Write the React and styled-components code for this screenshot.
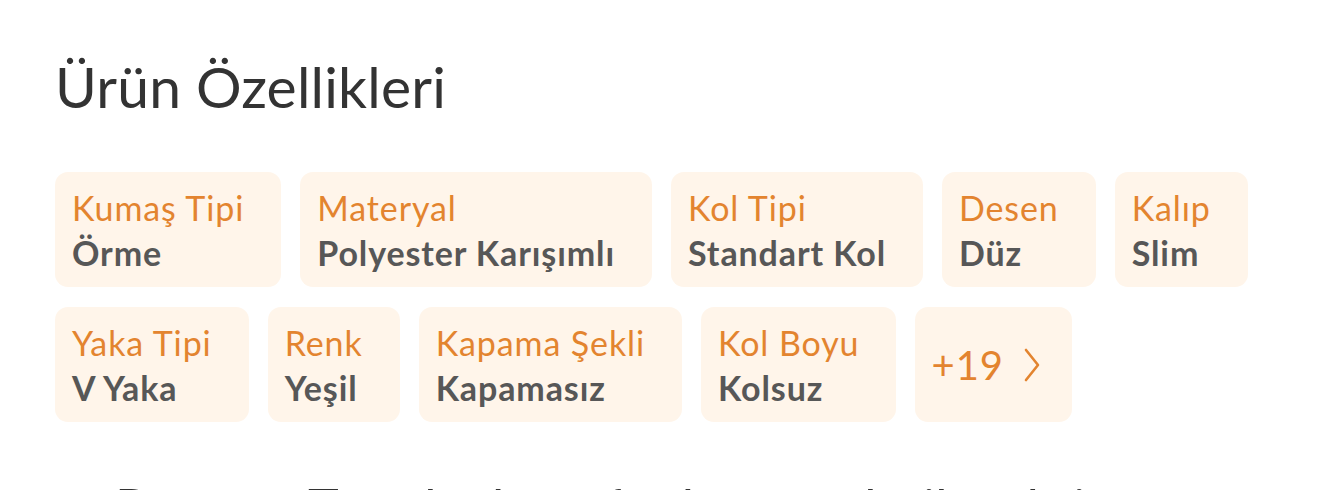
import React from 'react'
import styled, { createGlobalStyle } from 'styled-components'

const GlobalStyle = createGlobalStyle`
    body {
        margin: 0;
        background: #ffffff;
        font-family: Lato, "Open Sans", sans-serif;
        overflow: hidden;
    }
`

const features = [
    { label: 'Kumaş Tipi', value: 'Örme' },
    { label: 'Materyal', value: 'Polyester Karışımlı' },
    { label: 'Kol Tipi', value: 'Standart Kol' },
    { label: 'Desen', value: 'Düz' },
    { label: 'Kalıp', value: 'Slim' },
    { label: 'Yaka Tipi', value: 'V Yaka' },
    { label: 'Renk', value: 'Yeşil' },
    { label: 'Kapama Şekli', value: 'Kapamasız' },
    { label: 'Kol Boyu', value: 'Kolsuz' },
]

function App() {
    return (
        <Page>
            <GlobalStyle />
            <Title>Ürün Özellikleri</Title>
            <List>
                {features.map(f => (
                    <Card key={f.label}>
                        <Label>{f.label}</Label>
                        <Value>{f.value}</Value>
                    </Card>
                ))}
                <MoreCard>
                    <span>+19</span>
                    <svg width="16" height="34" viewBox="0 0 16 34" fill="none">
                        <polyline points="2,2 14,17 2,32" stroke="#e3842f" strokeWidth="2.6" strokeLinecap="round" strokeLinejoin="round" />
                    </svg>
                </MoreCard>
            </List>
            <Footer>Bu ürün Trendyol tarafından gönderilecektir.</Footer>
        </Page>
    )
}

export default App

const Page = styled.div`
    padding: 52px 0 0 55px;
    height: 490px;
    box-sizing: border-box;
    overflow: hidden;
`

const Title = styled.h2`
    margin: 0;
    font-size: 57px;
    font-weight: 400;
    letter-spacing: 0.2px;
    line-height: 1.2;
    color: #333333;
`

const List = styled.div`
    display: flex;
    flex-wrap: wrap;
    gap: 20px 19px;
    margin-top: 52px;
    width: 1281px;
`

const Card = styled.div`
    display: flex;
    flex-direction: column;
    height: 115px;
    box-sizing: border-box;
    padding: 13px 37px 12px 17px;
    background: #fff5ea;
    border-radius: 13px;
`

const Label = styled.span`
    font-size: 34px;
    letter-spacing: 0.9px;
    line-height: 45px;
    color: #e3842f;
    white-space: nowrap;
`

const Value = styled.span`
    font-size: 34px;
    letter-spacing: 0.9px;
    line-height: 45px;
    font-weight: 700;
    color: #575757;
    white-space: nowrap;
`

const MoreCard = styled.div`
    display: flex;
    align-items: center;
    gap: 20px;
    height: 115px;
    box-sizing: border-box;
    padding: 0 32px 0 16px;
    background: #fff5ea;
    border-radius: 13px;

    span {
        font-size: 40px;
        letter-spacing: 1px;
        color: #e3842f;
    }
`

const Footer = styled.p`
    margin: 54px 0 0 60px;
    font-size: 52px;
    line-height: 1.2;
    color: #333333;
    white-space: nowrap;
`
